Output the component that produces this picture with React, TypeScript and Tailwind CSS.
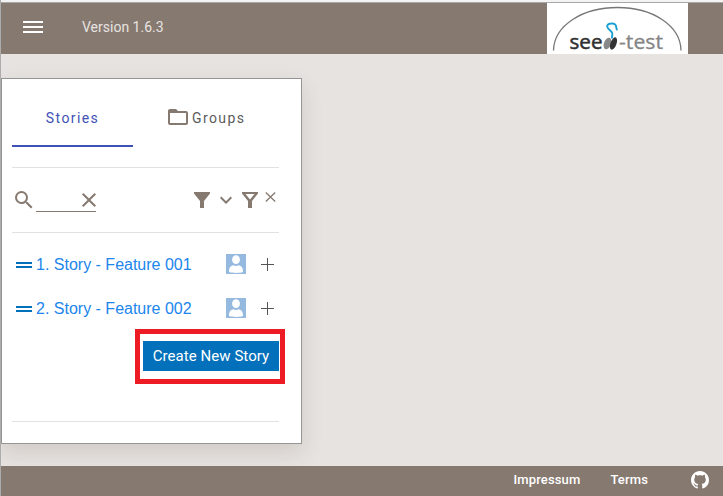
import type { ReactNode } from "react";

function Icon({ d, className = "", color = "fill-[#867970]" }: { d: string; className?: string; color?: string }) {
  return (
    <svg viewBox="0 0 24 24" className={`h-6 w-6 shrink-0 ${color} ${className}`}>
      <path d={d} />
    </svg>
  );
}

const paths = {
  search:
    "M15.5 14h-.79l-.28-.27A6.471 6.471 0 0 0 16 9.5 6.5 6.5 0 1 0 9.5 16c1.61 0 3.09-.59 4.23-1.57l.27.28v.79l5 4.99L20.49 19l-4.99-5zm-6 0C7.01 14 5 11.99 5 9.5S7.01 5 9.5 5 14 7.01 14 9.5 11.99 14 9.5 14z",
  close:
    "M19 6.41 17.59 5 12 10.59 6.41 5 5 6.41 10.59 12 5 17.59 6.41 19 12 13.41 17.59 19 19 17.59 13.41 12z",
  funnel: "M4 4h16v1.5l-6 7.5v7h-4v-7L4 5.5z",
  funnelOutline: "M4 4h16v1.5l-6 7.5v7h-4v-7L4 5.5zM7.500 6l4.500 5.500L16.500 6z",
  chevron: "M16.59 8.59 12 13.17 7.41 8.59 6 10l6 6 6-6z",
  folder:
    "M20 6h-8l-2-2H4c-1.1 0-2 .9-2 2v12c0 1.1.9 2 2 2h16c1.1 0 2-.9 2-2V8c0-1.1-.9-2-2-2zm0 12H4V8h16v10z",
  handle: "M20 9H4v2h16V9zM4 15h16v-2H4v2z",
  github:
    "M8 0C3.58 0 0 3.58 0 8c0 3.54 2.29 6.53 5.47 7.59.4.07.55-.17.55-.38 0-.19-.01-.82-.01-1.49-2.01.37-2.53-.49-2.69-.94-.09-.23-.48-.94-.82-1.13-.28-.15-.68-.52-.01-.53.63-.01 1.08.58 1.23.82.72 1.21 1.87.87 2.33.66.07-.52.28-.87.51-1.07-1.78-.2-3.64-.89-3.64-3.95 0-.87.31-1.59.82-2.15-.08-.2-.36-1.02.08-2.12 0 0 .67-.21 2.2.82.64-.18 1.32-.27 2-.27s1.36.09 2 .27c1.53-1.04 2.2-.82 2.2-.82.44 1.1.16 1.92.08 2.12.51.56.82 1.27.82 2.15 0 3.07-1.87 3.75-3.65 3.95.29.25.54.73.54 1.48 0 1.07-.01 1.93-.01 2.2 0 .21.15.46.55.38A8.01 8.01 0 0 0 16 8c0-4.42-3.58-8-8-8z",
};

function Logo() {
  return (
    <svg viewBox="0 0 141 51" className="h-[51px] w-[141px] bg-white">
      <path d="M6.500 47.500C7 22 36 4.500 70.500 4.500S133.500 22 134 47.500" fill="none" stroke="#777" strokeWidth="1.300" />
      <text
        x="22.500"
        y="46"
        textLength="33"
        lengthAdjust="spacingAndGlyphs"
        stroke="#303030"
        strokeWidth="0.500"
        className="fill-[#303030] font-['Open_Sans',sans-serif] text-[20px]"
      >
        see
      </text>
      <ellipse cx="60.500" cy="40.500" rx="3.500" ry="6" transform="rotate(20 60.500 40.500)" fill="#888" />
      <ellipse cx="66.500" cy="40.500" rx="3" ry="6.500" transform="rotate(20 66.500 40.500)" fill="#333" />
      <path
        d="M70.500 27c-1.800-1-.8-3.200-1.800-4.800-.9-1.500-2.700-1.900-4.400-1.700-2.500.2-4.300 1.200-4.100 3 .3 3 4 3.500 5 6.500.5 1.800-.4 3.200-.2 5.500"
        fill="none"
        stroke="#18a0d2"
        strokeWidth="1.900"
      />
      <text
        x="72"
        y="46"
        textLength="44"
        lengthAdjust="spacingAndGlyphs"
        stroke="#858585"
        strokeWidth="0.300"
        className="fill-[#858585] font-['Open_Sans',sans-serif] text-[20px]"
      >
        -test
      </text>
    </svg>
  );
}

function Avatar() {
  return (
    <svg viewBox="0 0 20 20" className="h-5 w-5">
      <path fill="#96badf" d="M0 0h20v20H0z" />
      <ellipse cx="10" cy="5.700" rx="3.900" ry="4.400" fill="#fff" />
      <path d="M3 18c0-4.500 1.500-6.200 4.500-6.700 1.500 1 3.500 1 5 0 3 .5 4.500 2.200 4.500 6.700-4 1.200-10 1.200-14 0z" fill="#fff" />
    </svg>
  );
}

function Story({ children }: { children: ReactNode }) {
  return (
    <li className="flex h-11 items-center">
      <Icon d={paths.handle} color="fill-[#0270ba]" className="mt-0.5" />
      <span className="mt-0.5 w-[190px] whitespace-nowrap text-[16px] text-[#2185ec]">{children}</span>
      <Avatar />
      <svg viewBox="0 0 13 13" className="ml-[15px] mt-px h-[13px] w-[13px]" stroke="#555">
        <path d="M6.500 0v13M0 6.500h13" />
      </svg>
    </li>
  );
}

export default function App() {
  return (
    <div className="flex h-[496px] w-[723px] flex-col overflow-hidden border-l border-[#acacac] bg-[#e7e3e0] font-['Liberation_Sans',Arial,sans-serif]">
      <div className="h-[3px] shrink-0 border-b border-[#a7a7a7] bg-[#f3f3f3]" />
      <header className="flex h-[51px] shrink-0 items-center bg-[#867970] pr-[35px]">
        <svg viewBox="0 0 20 12" className="mb-[3px] ml-[22px] h-3 w-5 fill-white">
          <path d="M0 0h20v2H0zM0 5h20v2H0zM0 10h20v2H0z" />
        </svg>
        <span className="mb-0.5 ml-[39px] mr-auto font-[Roboto,sans-serif] text-[14px] text-[#e7e3e0]">Version 1.6.3</span>
        <Logo />
      </header>

      <main className="flex-1 pt-6">
        <section className="relative h-[366px] w-[301px] border border-[#969593] bg-white pl-[10px] pr-[22px] shadow-[0_8px_20px_rgba(70,60,50,0.14)]">
          <nav className="flex h-[68px] font-[Roboto,sans-serif] text-[14px] tracking-[1.4px]">
            <div className="flex w-[121px] items-center justify-center border-b-2 border-[#3f51b5] pt-3 text-[#3f51b5]">Stories</div>
            <div className="flex items-center pl-[33px] pt-2 text-[#5c5c5c]">
              <Icon d={paths.folder} className="mb-px" />
              <span className="ml-0.5 pt-0.5">Groups</span>
            </div>
          </nav>
          <hr className="mt-5 border-[#e2e2e2]" />
          <div className="flex h-16 items-center">
            <Icon d={paths.search} />
            <div className="mb-px flex h-6 w-[60px] justify-end border-b border-[#867970]">
              <Icon d={paths.close} className="-mr-[5px]" />
            </div>
            <Icon d={paths.funnel} className="ml-[94px]" />
            <Icon d={paths.chevron} />
            <Icon d={paths.funnelOutline} />
            <svg viewBox="0 0 11 10" className="mb-[7px] ml-[3px] h-[10px] w-[11px] shrink-0" stroke="#867970" strokeWidth="1.300">
              <path d="m.8.5 9.400 9M10.200.5l-9.400 9" />
            </svg>
          </div>
          <hr className="border-[#e2e2e2]" />
          <ul className="pt-[9px]">
            <Story>1. Story - Feature 001</Story>
            <Story>2. Story - Feature 002</Story>
          </ul>
          <div className="flex justify-end pt-[11px]">
            <button className="h-[30px] w-[136px] whitespace-nowrap bg-[#0270ba] font-[Roboto,sans-serif] text-[15px] tracking-[0.05px] text-white">
              Create New Story
            </button>
          </div>
          <hr className="mt-[50px] border-[#e2e2e2]" />
          <div className="absolute left-[133px] top-[250px] h-[55px] w-[150px] border-[5px] border-[#ed1c24]" />
        </section>
      </main>

      <footer className="flex h-[30px] shrink-0 items-center justify-end bg-[#867970] pr-[14px] font-[Roboto,sans-serif] text-[13px] font-medium tracking-[0.14px] text-white">
        <span className="mb-0.5">Impressum</span>
        <span className="mb-0.5 ml-[30px]">Terms</span>
        <svg viewBox="0 0 16 16" className="mb-0.5 ml-[43px] h-[18px] w-[18px] fill-white">
          <path d={paths.github} />
        </svg>
      </footer>
    </div>
  );
}
